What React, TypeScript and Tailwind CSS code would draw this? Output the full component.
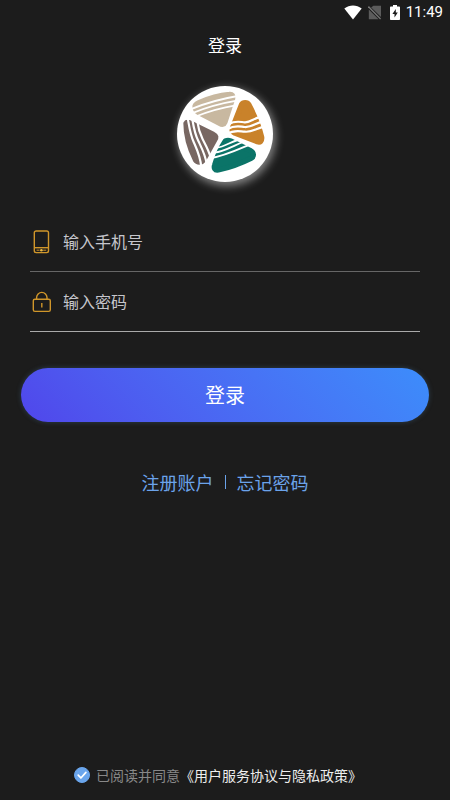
import { useState } from 'react'

function StatusBar() {
  return (
    <div className="flex h-6 items-center justify-end pr-[7px] text-white">
      <svg className="mr-1.5 h-[15px] w-[18px]" viewBox="0 0 18 15" fill="currentColor">
        <path d="M0.3 3.6C5.6-.6 12.4-.6 17.7 3.6L9 14.4Z" />
      </svg>
      <svg className="mr-[9px] h-[15px] w-[13px]" viewBox="0 0 13 15">
        <path d="M13 .8V12L3.2 2.6 5.4.8Z" fill="#5c5c5c" />
        <path d="M.8 4.4V14.2H10.6Z" fill="#5c5c5c" />
        <path d="M.4 1.6 12.6 14" stroke="#757575" strokeWidth="1.4" />
      </svg>
      <svg className="mr-1.5 h-[15px] w-[10px]" viewBox="0 0 10 15">
        <path d="M3 0h4v1.6h2.2a.8.8 0 0 1 .8.8v11.8a.8.8 0 0 1-.8.8H.8a.8.8 0 0 1-.8-.8V2.4a.8.8 0 0 1 .8-.8H3Z" fill="#fff" />
        <path d="M5.8 4 2.4 9h2.1v3.6L7.8 7.6H5.8Z" fill="#1c1c1c" />
      </svg>
      <span className="font-[Roboto,sans-serif] text-[15px]">11:49</span>
    </div>
  )
}

function Logo() {
  return (
    <div className="size-24 rounded-full bg-white shadow-[2px_3px_9px_1px_rgba(255,255,255,0.45)]">
      <svg className="size-full" viewBox="6 6 288 288" fill="none" strokeLinejoin="round">
        {/* beige */}
        <path d="M60 69C59 63 64 60 72 56 98 44 135 33 163 31 172 30 175 36 173 43L150 114C147 122 141 122 134 118L70 85C64 81 61 75 60 69Z" fill="#c8b8a0" stroke="#c8b8a0" strokeWidth="16" />
        <g stroke="#fff" strokeWidth="5.5">
          <path d="M46 76C90 58 135 45 188 36" />
          <path d="M50 88C92 71 137 58 186 50" />
          <path d="M58 99C98 83 138 71 182 64" />
        </g>
        {/* orange */}
        <path d="M200 61C204 54 217 54 221 61 237 91 252 124 260 160 261 171 256 176 247 173L179 147C171 143 170 137 173 130Z" fill="#c9822a" stroke="#c9822a" strokeWidth="16" />
        <g stroke="#fff" strokeWidth="6.5">
          <path d="M162 120C180 109 195 114 209 115 227 116 238 101 260 98" />
          <path d="M158 135C180 122 195 128 209 129 230 131 243 116 266 112" />
          <path d="M156 150C178 136 193 142 209 143 232 146 246 131 272 127" />
        </g>
        {/* brown */}
        <path d="M33 118C35 114 41 115 48 118L115 151C124 155 124 161 119 168L86 227C79 237 67 236 61 227 46 197 33 157 33 118Z" fill="#786762" stroke="#786762" strokeWidth="16" />
        <g stroke="#fff" strokeWidth="6.5">
          <path d="M38 102C42 122 45 150 56 174 67 199 76 216 79 250" />
          <path d="M52 106C55 124 59 149 70 171 81 194 91 212 95 240" />
          <path d="M67 112C69 128 73 146 83 166 93 185 102 200 108 224" />
        </g>
        {/* green */}
        <path d="M151 171C156 169 162 169 167 171L228 201C237 206 238 218 228 223 198 238 161 251 130 258 119 260 116 252 119 243 126 219 136 193 151 171Z" fill="#0b7468" stroke="#0b7468" strokeWidth="16" />
        <g stroke="#fff" strokeWidth="5.5">
          <path d="M126 191C148 188 164 175 188 168" />
          <path d="M118 206C146 203 174 186 204 174" />
          <path d="M108 222C146 217 186 198 224 182" />
        </g>
      </svg>
    </div>
  )
}

function PhoneIcon() {
  return (
    <svg className="h-6 w-[22px]" viewBox="0 0 22 24" fill="none" stroke="#d0962a" strokeWidth="1.4">
      <rect x="4.3" y="1" width="14.2" height="21.6" rx="1.8" />
      <path d="M4.3 17.7h14.2" />
      <path d="M6.6 20.2h3M13.2 20.2h3" strokeWidth="1" />
      <circle cx="11.4" cy="20.2" r="1.3" fill="#f0bc45" stroke="none" />
    </svg>
  )
}

function LockIcon() {
  return (
    <svg className="h-6 w-[22px]" viewBox="0 0 22 24" fill="none" stroke="#d0962a" strokeWidth="1.4">
      <rect x="3.3" y="9.2" width="17" height="12.2" rx="1.6" />
      <path d="M6.6 9.2V7.6a5.2 5.2 0 0 1 10.4 0v1.6" />
      <path d="M11.8 13v4.6" />
    </svg>
  )
}

export default function App() {
  const [agreed, setAgreed] = useState(true)

  return (
    <div className="flex min-h-screen flex-col bg-[#1c1c1c] font-['Noto_Sans_CJK_SC',sans-serif]">
      <StatusBar />
      <header className="flex h-11 items-center justify-center pb-0.5">
        <h1 className="text-[17px] text-white">登录</h1>
      </header>

      <main className="flex flex-1 flex-col">
        <div className="mt-[18px] flex justify-center">
          <Logo />
        </div>

        <form className="mt-[30px] flex flex-col" onSubmit={e => e.preventDefault()}>
          <div className="mx-[30px] flex flex-col">
            <div className="flex h-15 items-center gap-[11px] border-b border-[#666]">
              <label htmlFor="phone" aria-label="手机号"><PhoneIcon /></label>
              <input
                id="phone"
                type="tel"
                placeholder="输入手机号"
                className="min-w-0 flex-1 bg-transparent pb-0.5 text-base text-white outline-none placeholder:text-[#c6c6cc]"
              />
            </div>
            <div className="flex h-15 items-center gap-[11px] border-b border-[#aaa]">
              <label htmlFor="password" aria-label="密码"><LockIcon /></label>
              <input
                id="password"
                type="password"
                placeholder="输入密码"
                className="min-w-0 flex-1 bg-transparent pb-0.5 text-base text-white outline-none placeholder:text-[#c6c6cc]"
              />
            </div>
          </div>
          <button
            type="submit"
            className="mx-[21px] mt-9 h-[54px] rounded-full bg-linear-45 from-[#5046eb] to-[#3c8dfb] text-xl text-white shadow-[0_0_5px_rgba(80,130,170,0.35)]"
          >
            登录
          </button>
        </form>

        <nav className="mt-12 flex items-center justify-center gap-[11px] text-lg leading-6 text-[#6ba3ea]">
          <a href="#register">注册账户</a>
          <span className="h-3.5 w-px bg-[#6ba3ea]" />
          <a href="#forgot">忘记密码</a>
        </nav>

        <footer className="mt-auto flex items-center justify-center pt-8 pr-3.5 pb-[15px] text-sm">
          <label className="flex items-center gap-1.5 text-[#888]">
            <span className="grid size-4 place-items-center">
              <input
                type="checkbox"
                checked={agreed}
                onChange={e => setAgreed(e.target.checked)}
                className="col-start-1 row-start-1 size-4 appearance-none rounded-full border border-[#6aa5ec] checked:bg-[#6aa5ec]"
              />
              {agreed && (
                <svg className="pointer-events-none col-start-1 row-start-1 size-4" viewBox="0 0 16 16" fill="none" stroke="#fff" strokeWidth="1.7" strokeLinecap="round" strokeLinejoin="round">
                  <path d="m4.2 8.2 2.7 2.8 5-5.6" />
                </svg>
              )}
            </span>
            已阅读并同意
          </label>
          <a href="#terms" className="text-[#eee]">《用户服务协议与隐私政策》</a>
        </footer>
      </main>
    </div>
  )
}
